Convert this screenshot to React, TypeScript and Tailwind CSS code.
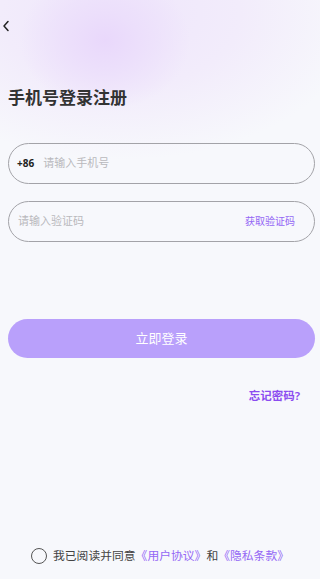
import { useState } from 'react'

const font = { fontFamily: '"Noto Sans", "Noto Sans CJK SC", sans-serif' }

export default function App() {
  const [agreed, setAgreed] = useState(false)

  return (
    <div
      className="relative h-[579px] w-[320px] overflow-hidden bg-[#f7f8fc] text-[#333]"
      style={font}
    >
      {/* 顶部紫色光晕 */}
      <div className="pointer-events-none absolute left-[-120px] top-[-130px] h-[290px] w-[480px] rounded-full bg-[radial-gradient(closest-side,#efe6fb_0%,#f2ecfb_50%,rgba(247,248,252,0)_100%)]" />
      <div className="pointer-events-none absolute left-[20px] top-[-30px] h-[140px] w-[170px] rounded-full bg-[radial-gradient(closest-side,#e9d8fb_0%,#ecdffb_40%,rgba(240,232,251,0)_100%)]" />

      <div className="relative flex h-full flex-col">
        {/* 返回 */}
        <div className="flex h-[52px] items-center pl-[2px]">
          <svg width="8" height="12" viewBox="0 0 8 12" fill="none">
            <path d="M6 1.5 L2 6 L6 10.5" stroke="#222" strokeWidth="1.5" strokeLinecap="round" strokeLinejoin="round" />
          </svg>
        </div>

        <h1 className="mt-[33px] pl-[8px] text-[17px] font-semibold leading-[26px] text-[#333]">
          手机号登录注册
        </h1>

        {/* 手机号 */}
        <div className="ml-[8px] mr-[5px] mt-[32px] flex h-[41px] items-center rounded-full border border-[#a3a3a8] px-[8px]">
          <span className="text-[10px] font-bold text-[#222]">+86</span>
          <input
            className="ml-[9px] min-w-0 flex-1 bg-transparent text-[11px] text-[#333] outline-none placeholder:text-[#b9b9bd]"
            placeholder="请输入手机号"
          />
        </div>

        {/* 验证码 */}
        <div className="ml-[8px] mr-[5px] mt-[17px] flex h-[41px] items-center rounded-full border border-[#a3a3a8] pl-[9px] pr-[19px]">
          <input
            className="min-w-0 flex-1 bg-transparent text-[11px] text-[#333] outline-none placeholder:text-[#b9b9bd]"
            placeholder="请输入验证码"
          />
          <span className="text-[10px] text-[#9467f5]">获取验证码</span>
        </div>

        <button className="ml-[8px] mr-[5px] mt-[77px] h-[39px] rounded-full bg-[#b9a0fb] text-[13px] text-white">
          立即登录
        </button>

        <div className="mt-[29px] flex justify-end pr-[20px]">
          <span className="text-[11.5px] font-semibold text-[#8b4cf0]">忘记密码?</span>
        </div>

        <div className="mt-auto mb-[14px] flex items-center justify-center">
          <button
            onClick={() => setAgreed(!agreed)}
            className={`h-[16px] w-[16px] rounded-full border-[1.5px] border-[#555] ${agreed ? 'bg-[#9467f5]' : ''}`}
          />
          <span className="ml-[6px] text-[11.8px] text-[#444]">我已阅读并同意</span>
          <span className="text-[11.8px] text-[#9467f5]">《用户协议》</span>
          <span className="text-[11.8px] text-[#444]">和</span>
          <span className="text-[11.8px] text-[#9467f5]">《隐私条款》</span>
        </div>
      </div>
    </div>
  )
}
